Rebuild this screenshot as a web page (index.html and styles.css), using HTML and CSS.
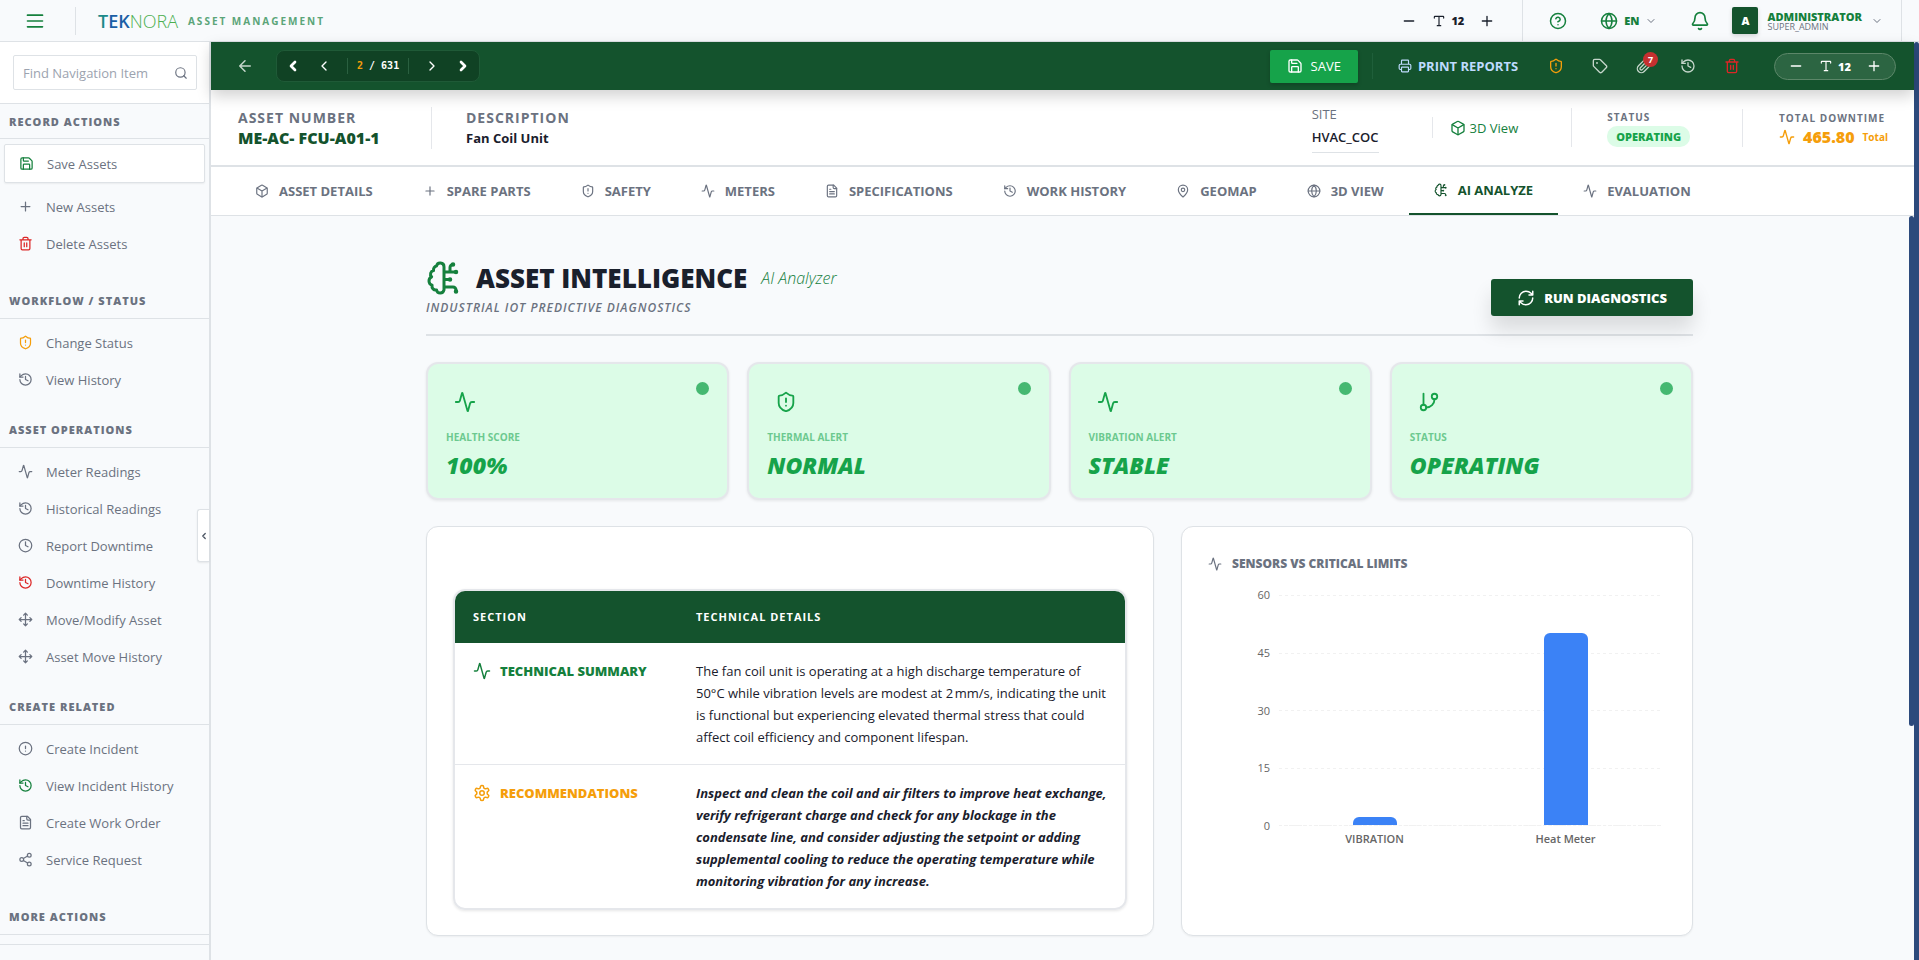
FILE: index.html
```html
<!DOCTYPE html>
<html lang="en">
<head>
  <meta charset="UTF-8">
  <meta name="viewport" content="width=device-width, initial-scale=1.0">
  <title>Teknora Asset Management</title>
  <link rel="stylesheet" href="styles.css">
</head>
<body>
  <!-- Icon sprite -->
  <svg class="sprite" aria-hidden="true">
    <symbol id="i-menu" viewBox="0 0 24 24"><path d="M3 5h18M3 12h18M3 19h18"/></symbol>
    <symbol id="i-search" viewBox="0 0 24 24"><circle cx="11" cy="11" r="8"/><path d="m21 21-4.3-4.3"/></symbol>
    <symbol id="i-save" viewBox="0 0 24 24"><path d="M15.2 3a2 2 0 0 1 1.4.6l3.8 3.8a2 2 0 0 1 .6 1.4V19a2 2 0 0 1-2 2H5a2 2 0 0 1-2-2V5a2 2 0 0 1 2-2z"/><path d="M17 21v-7a1 1 0 0 0-1-1H8a1 1 0 0 0-1 1v7M7 3v4a1 1 0 0 0 1 1h7"/></symbol>
    <symbol id="i-plus" viewBox="0 0 24 24"><path d="M5 12h14M12 5v14"/></symbol>
    <symbol id="i-minus" viewBox="0 0 24 24"><path d="M5 12h14"/></symbol>
    <symbol id="i-trash" viewBox="0 0 24 24"><path d="M3 6h18M19 6v14a2 2 0 0 1-2 2H7a2 2 0 0 1-2-2V6M8 6V4a2 2 0 0 1 2-2h4a2 2 0 0 1 2 2v2M10 11v6M14 11v6"/></symbol>
    <symbol id="i-shield" viewBox="0 0 24 24"><path d="M20 13c0 5-3.5 7.5-7.66 8.95a1 1 0 0 1-.67-.01C7.5 20.5 4 18 4 13V6a1 1 0 0 1 1-1c2 0 4.5-1.2 6.24-2.72a1.17 1.17 0 0 1 1.52 0C14.51 3.81 17 5 19 5a1 1 0 0 1 1 1z"/><path d="M12 8v4M12 16h.01"/></symbol>
    <symbol id="i-history" viewBox="0 0 24 24"><path d="M3 12a9 9 0 1 0 9-9 9.75 9.75 0 0 0-6.74 2.74L3 8"/><path d="M3 3v5h5M12 7v5l4 2"/></symbol>
    <symbol id="i-clock" viewBox="0 0 24 24"><circle cx="12" cy="12" r="10"/><path d="M12 6v6l4 2"/></symbol>
    <symbol id="i-pulse" viewBox="0 0 24 24"><path d="M22 12h-2.48a2 2 0 0 0-1.93 1.46l-2.35 8.36a.25.25 0 0 1-.48 0L9.24 2.18a.25.25 0 0 0-.48 0l-2.35 8.36A2 2 0 0 1 4.49 12H2"/></symbol>
    <symbol id="i-move" viewBox="0 0 24 24"><path d="M12 2v20M15 19l-3 3-3-3M19 9l3 3-3 3M2 12h20M5 9l-3 3 3 3M9 5l3-3 3 3"/></symbol>
    <symbol id="i-alert" viewBox="0 0 24 24"><circle cx="12" cy="12" r="10"/><path d="M12 8v4M12 16h.01"/></symbol>
    <symbol id="i-file" viewBox="0 0 24 24"><path d="M15 2H6a2 2 0 0 0-2 2v16a2 2 0 0 0 2 2h12a2 2 0 0 0 2-2V7z"/><path d="M14 2v4a2 2 0 0 0 2 2h4M10 9H8M16 13H8M16 17H8"/></symbol>
    <symbol id="i-share" viewBox="0 0 24 24"><circle cx="18" cy="5" r="3"/><circle cx="6" cy="12" r="3"/><circle cx="18" cy="19" r="3"/><path d="m8.59 13.51 6.83 3.98M15.41 6.51l-6.82 3.98"/></symbol>
    <symbol id="i-left" viewBox="0 0 24 24"><path d="m15 18-6-6 6-6"/></symbol>
    <symbol id="i-right" viewBox="0 0 24 24"><path d="m9 18 6-6-6-6"/></symbol>
    <symbol id="i-down" viewBox="0 0 24 24"><path d="m6 9 6 6 6-6"/></symbol>
    <symbol id="i-back" viewBox="0 0 24 24"><path d="m12 19-7-7 7-7M19 12H5"/></symbol>
    <symbol id="i-type" viewBox="0 0 24 24"><path d="M12 4v16M4 7V5a1 1 0 0 1 1-1h14a1 1 0 0 1 1 1v2M9 20h6"/></symbol>
    <symbol id="i-help" viewBox="0 0 24 24"><circle cx="12" cy="12" r="10"/><path d="M9.09 9a3 3 0 0 1 5.83 1c0 2-3 3-3 3M12 17h.01"/></symbol>
    <symbol id="i-globe" viewBox="0 0 24 24"><circle cx="12" cy="12" r="10"/><path d="M12 2a14.5 14.5 0 0 0 0 20 14.5 14.5 0 0 0 0-20M2 12h20"/></symbol>
    <symbol id="i-bell" viewBox="0 0 24 24"><path d="M10.27 21a2 2 0 0 0 3.46 0M3.26 15.33A1 1 0 0 0 4 17h16a1 1 0 0 0 .74-1.67C19.41 13.96 18 12.5 18 8A6 6 0 0 0 6 8c0 4.5-1.41 5.96-2.74 7.33"/></symbol>
    <symbol id="i-printer" viewBox="0 0 24 24"><path d="M6 18H4a2 2 0 0 1-2-2v-5a2 2 0 0 1 2-2h16a2 2 0 0 1 2 2v5a2 2 0 0 1-2 2h-2M6 9V3a1 1 0 0 1 1-1h10a1 1 0 0 1 1 1v6"/><rect x="6" y="14" width="12" height="8" rx="1"/></symbol>
    <symbol id="i-tag" viewBox="0 0 24 24"><path d="M12.59 2.59A2 2 0 0 0 11.17 2H4a2 2 0 0 0-2 2v7.17a2 2 0 0 0 .59 1.42l8.7 8.7a2.43 2.43 0 0 0 3.42 0l6.58-6.58a2.43 2.43 0 0 0 0-3.42z"/><circle cx="7.5" cy="7.5" r=".5"/></symbol>
    <symbol id="i-clip" viewBox="0 0 24 24"><path d="m21.44 11.05-9.19 9.19a6 6 0 0 1-8.49-8.49l8.57-8.57A4 4 0 1 1 18 8.84l-8.59 8.57a2 2 0 0 1-2.83-2.83l8.49-8.48"/></symbol>
    <symbol id="i-box" viewBox="0 0 24 24"><path d="M21 8a2 2 0 0 0-1-1.73l-7-4a2 2 0 0 0-2 0l-7 4A2 2 0 0 0 3 8v8a2 2 0 0 0 1 1.73l7 4a2 2 0 0 0 2 0l7-4A2 2 0 0 0 21 16z"/><path d="m3.3 7 8.7 5 8.7-5M12 22V12"/></symbol>
    <symbol id="i-pin" viewBox="0 0 24 24"><path d="M20 10c0 4.99-5.54 10.19-7.4 11.8a1 1 0 0 1-1.2 0C9.54 20.19 4 14.99 4 10a8 8 0 0 1 16 0"/><circle cx="12" cy="10" r="3"/></symbol>
    <symbol id="i-brain" viewBox="0 0 24 24"><path d="M12 4.5a2.5 2.5 0 0 0-4.96-.46 2.5 2.5 0 0 0-1.98 3 2.5 2.5 0 0 0-1.32 4.24 3 3 0 0 0 .34 5.58 2.5 2.5 0 0 0 2.96 3.08 2.5 2.5 0 0 0 4.91.05L12 20V4.5ZM12 13h4M12 18h6a2 2 0 0 1 2 2v1M12 8h8M16 8V5a2 2 0 0 1 2-2"/><circle cx="16" cy="13" r=".5"/><circle cx="18" cy="3" r=".5"/><circle cx="20" cy="21" r=".5"/><circle cx="20" cy="8" r=".5"/></symbol>
    <symbol id="i-refresh" viewBox="0 0 24 24"><path d="M3 12a9 9 0 0 1 9-9 9.75 9.75 0 0 1 6.74 2.74L21 8M21 3v5h-5M21 12a9 9 0 0 1-9 9 9.75 9.75 0 0 1-6.74-2.74L3 16M8 16H3v5"/></symbol>
    <symbol id="i-branch" viewBox="0 0 24 24"><path d="M6 3v12"/><circle cx="18" cy="6" r="3"/><circle cx="6" cy="18" r="3"/><path d="M18 9a9 9 0 0 1-9 9"/></symbol>
    <symbol id="i-gear" viewBox="0 0 24 24"><path d="M12.22 2h-.44a2 2 0 0 0-2 2v.18a2 2 0 0 1-1 1.73l-.43.25a2 2 0 0 1-2 0l-.15-.08a2 2 0 0 0-2.73.73l-.22.38a2 2 0 0 0 .73 2.73l.15.1a2 2 0 0 1 1 1.72v.51a2 2 0 0 1-1 1.74l-.15.09a2 2 0 0 0-.73 2.73l.22.38a2 2 0 0 0 2.73.73l.15-.08a2 2 0 0 1 2 0l.43.25a2 2 0 0 1 1 1.73V20a2 2 0 0 0 2 2h.44a2 2 0 0 0 2-2v-.18a2 2 0 0 1 1-1.73l.43-.25a2 2 0 0 1 2 0l.15.08a2 2 0 0 0 2.73-.73l.22-.39a2 2 0 0 0-.73-2.73l-.15-.08a2 2 0 0 1-1-1.74v-.5a2 2 0 0 1 1-1.74l.15-.09a2 2 0 0 0 .73-2.73l-.22-.38a2 2 0 0 0-2.73-.73l-.15.08a2 2 0 0 1-2 0l-.43-.25a2 2 0 0 1-1-1.73V4a2 2 0 0 0-2-2z"/><circle cx="12" cy="12" r="3"/></symbol>
  </svg>

  <!-- Top bar -->
  <header class="topbar">
    <button class="icon-btn menu-btn" aria-label="Menu"><svg class="icon lg"><use href="#i-menu"/></svg></button>
    <div class="brand">
      <span class="logo"><b><i>T</i>EK</b>NORA</span>
      <span class="brand-sub">ASSET MANAGEMENT</span>
    </div>
    <div class="font-size">
      <button class="icon-btn" aria-label="Smaller text"><svg class="icon"><use href="#i-minus"/></svg></button>
      <span class="size-value"><svg class="icon sm"><use href="#i-type"/></svg>12</span>
      <button class="icon-btn" aria-label="Larger text"><svg class="icon"><use href="#i-plus"/></svg></button>
    </div>
    <div class="top-tools">
      <button class="icon-btn" aria-label="Help"><svg class="icon md"><use href="#i-help"/></svg></button>
      <button class="icon-btn lang"><svg class="icon md"><use href="#i-globe"/></svg>EN<svg class="icon xs grey"><use href="#i-down"/></svg></button>
      <button class="icon-btn" aria-label="Notifications"><svg class="icon lg"><use href="#i-bell"/></svg></button>
      <button class="user">
        <span class="avatar">A</span>
        <span class="user-text"><strong>ADMINISTRATOR</strong><small>SUPER_ADMIN</small></span>
        <svg class="icon xs grey"><use href="#i-down"/></svg>
      </button>
    </div>
  </header>

  <div class="layout">
    <!-- Sidebar -->
    <aside class="sidebar">
      <div class="search">
        <label class="search-box">
          <input type="text" placeholder="Find Navigation Item" aria-label="Find Navigation Item">
          <svg class="icon sm"><use href="#i-search"/></svg>
        </label>
      </div>
      <nav class="nav">
        <h2>RECORD ACTIONS</h2>
        <ul class="tall">
          <li><a href="#" class="active"><svg class="icon green"><use href="#i-save"/></svg>Save Assets</a></li>
          <li><a href="#"><svg class="icon"><use href="#i-plus"/></svg>New Assets</a></li>
          <li><a href="#"><svg class="icon red"><use href="#i-trash"/></svg>Delete Assets</a></li>
        </ul>
        <h2>WORKFLOW / STATUS</h2>
        <ul>
          <li><a href="#"><svg class="icon amber"><use href="#i-shield"/></svg>Change Status</a></li>
          <li><a href="#"><svg class="icon"><use href="#i-history"/></svg>View History</a></li>
        </ul>
        <h2>ASSET OPERATIONS</h2>
        <ul>
          <li><a href="#"><svg class="icon"><use href="#i-pulse"/></svg>Meter Readings</a></li>
          <li><a href="#"><svg class="icon"><use href="#i-history"/></svg>Historical Readings</a></li>
          <li><a href="#"><svg class="icon"><use href="#i-clock"/></svg>Report Downtime</a></li>
          <li><a href="#"><svg class="icon red"><use href="#i-history"/></svg>Downtime History</a></li>
          <li><a href="#"><svg class="icon"><use href="#i-move"/></svg>Move/Modify Asset</a></li>
          <li><a href="#"><svg class="icon"><use href="#i-move"/></svg>Asset Move History</a></li>
        </ul>
        <h2>CREATE RELATED</h2>
        <ul class="tall">
          <li><a href="#"><svg class="icon"><use href="#i-alert"/></svg>Create Incident</a></li>
          <li><a href="#"><svg class="icon green"><use href="#i-history"/></svg>View Incident History</a></li>
          <li><a href="#"><svg class="icon"><use href="#i-file"/></svg>Create Work Order</a></li>
          <li><a href="#"><svg class="icon"><use href="#i-share"/></svg>Service Request</a></li>
        </ul>
        <h2>MORE ACTIONS</h2>
      </nav>
      <div class="sidebar-foot"></div>
      <button class="collapse" aria-label="Collapse sidebar"><svg class="icon xs"><use href="#i-left"/></svg></button>
    </aside>

    <main class="main">
      <!-- Record toolbar -->
      <div class="toolbar">
        <button class="icon-btn pale" aria-label="Back"><svg class="icon md"><use href="#i-back"/></svg></button>
        <div class="pager">
          <button class="icon-btn bold" aria-label="First"><svg class="icon"><use href="#i-left"/></svg></button>
          <button class="icon-btn" aria-label="Previous"><svg class="icon"><use href="#i-left"/></svg></button>
          <span class="count"><em>2</em> / 631</span>
          <button class="icon-btn" aria-label="Next"><svg class="icon"><use href="#i-right"/></svg></button>
          <button class="icon-btn bold" aria-label="Last"><svg class="icon"><use href="#i-right"/></svg></button>
        </div>
        <button class="save"><svg class="icon"><use href="#i-save"/></svg>SAVE</button>
        <button class="print"><svg class="icon sm"><use href="#i-printer"/></svg>PRINT REPORTS</button>
        <div class="tool-icons">
          <button class="icon-btn amber" aria-label="Change status"><svg class="icon"><use href="#i-shield"/></svg></button>
          <button class="icon-btn pale" aria-label="Tag"><svg class="icon"><use href="#i-tag"/></svg></button>
          <button class="icon-btn pale" aria-label="Attachments"><svg class="icon"><use href="#i-clip"/></svg><span class="badge">7</span></button>
          <button class="icon-btn pale" aria-label="History"><svg class="icon"><use href="#i-history"/></svg></button>
          <button class="icon-btn trash" aria-label="Delete"><svg class="icon"><use href="#i-trash"/></svg></button>
        </div>
        <div class="font-size pill">
          <button class="icon-btn" aria-label="Smaller text"><svg class="icon"><use href="#i-minus"/></svg></button>
          <span class="size-value"><svg class="icon sm"><use href="#i-type"/></svg>12</span>
          <button class="icon-btn" aria-label="Larger text"><svg class="icon"><use href="#i-plus"/></svg></button>
        </div>
      </div>

      <!-- Record summary -->
      <section class="summary">
        <div class="field number">
          <span class="label">ASSET NUMBER</span>
          <strong>ME-AC- FCU-A01-1</strong>
        </div>
        <div class="field desc">
          <span class="label">DESCRIPTION</span>
          <strong>Fan Coil Unit</strong>
        </div>
        <div class="site">
          <span>SITE</span>
          <strong>HVAC_COC</strong>
        </div>
        <a href="#" class="view3d"><svg class="icon"><use href="#i-box"/></svg>3D View</a>
        <div class="status">
          <span class="label small">STATUS</span>
          <span class="chip">OPERATING</span>
        </div>
        <div class="downtime">
          <span class="label small">TOTAL DOWNTIME</span>
          <div class="hours"><svg class="icon"><use href="#i-pulse"/></svg><strong>465.80</strong><small>Total</small></div>
        </div>
      </section>

      <!-- Tabs -->
      <nav class="tabs">
        <a href="#"><svg class="icon sm"><use href="#i-box"/></svg>ASSET DETAILS</a>
        <a href="#"><svg class="icon sm"><use href="#i-plus"/></svg>SPARE PARTS</a>
        <a href="#"><svg class="icon sm"><use href="#i-shield"/></svg>SAFETY</a>
        <a href="#"><svg class="icon sm"><use href="#i-pulse"/></svg>METERS</a>
        <a href="#"><svg class="icon sm"><use href="#i-file"/></svg>SPECIFICATIONS</a>
        <a href="#"><svg class="icon sm"><use href="#i-history"/></svg>WORK HISTORY</a>
        <a href="#"><svg class="icon sm"><use href="#i-pin"/></svg>GEOMAP</a>
        <a href="#"><svg class="icon sm"><use href="#i-globe"/></svg>3D VIEW</a>
        <a href="#" class="current"><svg class="icon sm"><use href="#i-brain"/></svg>AI ANALYZE</a>
        <a href="#"><svg class="icon sm"><use href="#i-pulse"/></svg>EVALUATION</a>
      </nav>

      <!-- AI analyzer -->
      <div class="content">
        <div class="page-head">
          <div>
            <h1><svg class="icon xl"><use href="#i-brain"/></svg>ASSET INTELLIGENCE <small>AI Analyzer</small></h1>
            <p>INDUSTRIAL IOT PREDICTIVE DIAGNOSTICS</p>
          </div>
          <button class="run"><svg class="icon md"><use href="#i-refresh"/></svg>RUN DIAGNOSTICS</button>
        </div>

        <div class="cards">
          <div class="card">
            <svg class="icon big"><use href="#i-pulse"/></svg>
            <span class="card-label">HEALTH SCORE</span>
            <strong>100%</strong>
          </div>
          <div class="card">
            <svg class="icon big"><use href="#i-shield"/></svg>
            <span class="card-label">THERMAL ALERT</span>
            <strong>NORMAL</strong>
          </div>
          <div class="card">
            <svg class="icon big"><use href="#i-pulse"/></svg>
            <span class="card-label">VIBRATION ALERT</span>
            <strong>STABLE</strong>
          </div>
          <div class="card">
            <svg class="icon big"><use href="#i-branch"/></svg>
            <span class="card-label">STATUS</span>
            <strong>OPERATING</strong>
          </div>
        </div>

        <div class="panels">
          <section class="panel report">
            <div class="table-wrap">
              <table>
                <thead>
                  <tr><th class="col-section">SECTION</th><th>TECHNICAL DETAILS</th></tr>
                </thead>
                <tbody>
                  <tr>
                    <th scope="row" class="green"><span><svg class="icon md"><use href="#i-pulse"/></svg>TECHNICAL SUMMARY</span></th>
                    <td>The fan coil unit is operating at a high discharge temperature of 50°C while vibration levels are modest at 2&#8239;mm/s, indicating the unit is functional but experiencing elevated thermal stress that could affect coil efficiency and component lifespan.</td>
                  </tr>
                  <tr>
                    <th scope="row" class="amber"><span><svg class="icon md"><use href="#i-gear"/></svg>RECOMMENDATIONS</span></th>
                    <td class="advice">Inspect and clean the coil and air filters to improve heat exchange, verify refrigerant charge and check for any blockage in the condensate line, and consider adjusting the setpoint or adding supplemental cooling to reduce the operating temperature while monitoring vibration for any increase.</td>
                  </tr>
                </tbody>
              </table>
            </div>
          </section>

          <section class="panel sensors">
            <h3><svg class="icon sm"><use href="#i-pulse"/></svg>SENSORS VS CRITICAL LIMITS</h3>
            <div class="chart">
              <div class="axis"><span>60</span><span>45</span><span>30</span><span>15</span><span>0</span></div>
              <div class="plot">
                <div class="slot"><div class="bar" style="height: 3.33%"></div></div>
                <div class="slot"><div class="bar" style="height: 83.33%"></div></div>
              </div>
              <div class="names"><span>VIBRATION</span><span>Heat Meter</span></div>
            </div>
          </section>
        </div>
        <div class="thumb inner"></div>
      </div>
    </main>
    <div class="scroll-rail"></div>
  </div>
</body>
</html>
```
FILE: styles.css
```css
/* Global Styles */
* {
  margin: 0;
  padding: 0;
  box-sizing: border-box;
}

body {
  height: 100vh;
  display: flex;
  flex-direction: column;
  overflow: hidden;
  font-family: "Open Sans", "Noto Sans", sans-serif;
  font-size: 13px;
  color: #1a202c;
  background: #f8fafc;
}

button,
input {
  font: inherit;
  color: inherit;
  border: 0;
  background: none;
}

button {
  cursor: pointer;
}

a {
  color: inherit;
  text-decoration: none;
}

/* Icons */
.sprite {
  position: absolute;
  width: 0;
  height: 0;
}

.icon {
  width: 16px;
  height: 16px;
  flex: none;
  fill: none;
  stroke: currentColor;
  stroke-width: 2;
  stroke-linecap: round;
  stroke-linejoin: round;
}

.icon.xs { width: 12px; height: 12px; }
.icon.sm { width: 14px; height: 14px; }
.icon.md { width: 18px; height: 18px; }
.icon.lg { width: 20px; height: 20px; }
.icon.big { width: 22px; height: 22px; }
.icon.xl { width: 36px; height: 36px; }

.green { color: #15803d; }
.red { color: #dc2626; }
.amber { color: #f59e0b; }
.grey { color: #6b7280; }

.icon-btn {
  display: flex;
  align-items: center;
  justify-content: center;
}

/* Top bar */
.topbar {
  height: 42px;
  flex: none;
  display: flex;
  align-items: center;
  border-bottom: 1px solid #dee2e6;
}

.menu-btn {
  width: 76px;
  height: 28px;
  padding-right: 6px;
  color: #15803d;
  border-right: 1px solid #dee2e6;
}

.brand {
  display: flex;
  align-items: center;
  gap: 10px;
  padding-left: 22px;
  margin-right: auto;
}

.logo {
  font-size: 18px;
  line-height: 20px;
  font-weight: 300;
  color: #4caf50;
}

.logo b {
  font-weight: 600;
  color: #1b5fa6;
}

.logo i {
  font-style: normal;
  color: #1c8a8a;
}

.brand-sub {
  font-size: 10px;
  font-weight: 700;
  letter-spacing: 2px;
  color: #5ba579;
}

.font-size {
  display: flex;
  align-items: center;
  gap: 15px;
}

.font-size .size-value {
  display: flex;
  align-items: center;
  gap: 5px;
  font-size: 11px;
  font-weight: 800;
}

.topbar .font-size {
  padding-right: 27px;
}

.top-tools {
  height: 41px;
  display: flex;
  align-items: center;
  gap: 33px;
  margin-right: 17px;
  padding: 0 18px 0 26px;
  border-left: 1px solid #dee2e6;
  border-right: 1px solid #dee2e6;
  color: #15803d;
}

.lang {
  gap: 6px;
  font-size: 11px;
  font-weight: 800;
}

.user {
  display: flex;
  align-items: center;
  gap: 9px;
  margin-left: -11px;
}

.avatar {
  width: 26px;
  height: 27px;
  line-height: 27px;
  border-radius: 2px;
  background: #14532d;
  color: #ffffff;
  font-weight: 800;
  font-size: 11px;
  box-shadow: 0 2px 4px rgba(0, 0, 0, 0.15);
}

.user-text {
  display: flex;
  flex-direction: column;
  text-align: left;
}

.user-text strong {
  font-size: 11px;
  line-height: 11px;
  font-weight: 800;
}

.user-text small {
  font-size: 9px;
  line-height: 9px;
  font-weight: 500;
  color: #6b7280;
}

/* Layout */
.layout {
  flex: 1;
  min-height: 0;
  display: flex;
}

.main {
  flex: 1;
  min-width: 0;
  display: flex;
  flex-direction: column;
}

.scroll-rail {
  width: 5px;
  background: #2c4a7c;
  border-radius: 3px 3px 0 0;
}

/* Sidebar */
.sidebar {
  position: relative;
  width: 211px;
  flex: none;
  display: flex;
  flex-direction: column;
  border-right: 2px solid #dee2e6;
}

.search {
  padding: 13px 12px 13px 13px;
  background: #ffffff;
  border-bottom: 1px solid #dee2e6;
}

.search-box {
  height: 35px;
  display: flex;
  align-items: center;
  padding: 0 8px 0 9px;
  border: 1px solid #dee2e6;
  border-radius: 2px;
  color: #6b7280;
}

.search-box input {
  flex: 1;
  min-width: 0;
  outline: none;
}

.search-box input::placeholder {
  color: #9ca3af;
}

.nav {
  flex: 1;
  min-height: 0;
  overflow: hidden;
}

.nav h2 {
  height: 36px;
  padding: 0 9px;
  font-size: 11px;
  line-height: 35px;
  font-weight: 800;
  letter-spacing: 1px;
  color: #6b7280;
  border-bottom: 1px solid #dee2e6;
}

.nav h2:first-child {
  height: 35px;
}

.nav ul {
  list-style: none;
  padding: 5px 4px 14px;
}

.nav ul.tall {
  padding-bottom: 21px;
}

.nav a {
  height: 37px;
  display: flex;
  align-items: center;
  gap: 13px;
  padding: 0 14px;
  font-weight: 500;
  color: #6b7280;
}

.nav .icon {
  width: 15px;
  height: 15px;
}

.nav a.active {
  height: 39px;
  margin-bottom: 5px;
  background: #ffffff;
  border: 1px solid #dee2e6;
  border-radius: 2px;
  box-shadow: 0 1px 2px rgba(0, 0, 0, 0.06);
}

.sidebar-foot {
  height: 16px;
  border-top: 1px solid #dee2e6;
}

.collapse {
  position: absolute;
  right: 0;
  top: 467px;
  width: 12px;
  height: 53px;
  display: flex;
  align-items: center;
  justify-content: center;
  color: #4b5563;
  background: #ffffff;
  border: 1px solid #dee2e6;
  border-right: 0;
  border-radius: 3px 0 0 3px;
  box-shadow: 0 1px 2px rgba(0, 0, 0, 0.08);
}

.collapse .icon {
  stroke-width: 3;
  width: 10px;
}

/* Record toolbar */
.toolbar {
  position: relative;
  height: 48px;
  flex: none;
  display: flex;
  align-items: center;
  padding: 0 18px 0 25px;
  background: #14532d;
  color: #ffffff;
  box-shadow: 0 6px 14px rgba(0, 0, 0, 0.18);
}

.toolbar .pale {
  color: #c5d6cb;
}

.pager {
  height: 32px;
  display: flex;
  align-items: center;
  gap: 15px;
  margin-left: 22px;
  margin-right: auto;
  padding: 0 8px;
  border: 1px solid #1f5a37;
  border-radius: 8px;
  background: #104224;
}

.pager .bold .icon {
  stroke-width: 4;
}

.count {
  height: 16px;
  padding: 0 9px;
  font-family: "DejaVu Sans Mono", "DejaVu Sans", monospace;
  font-size: 10px;
  line-height: 16px;
  font-weight: 700;
  border-left: 1px solid #2a6040;
  border-right: 1px solid #2a6040;
}

.count em {
  font-style: normal;
  color: #f59e0b;
}

.save {
  height: 33px;
  display: flex;
  align-items: center;
  gap: 8px;
  padding: 0 17px;
  border-radius: 2px;
  background: #16a34a;
  box-shadow: 0 2px 4px rgba(0, 0, 0, 0.2);
}

.print {
  height: 26px;
  display: flex;
  align-items: center;
  gap: 6px;
  margin-left: 14px;
  padding-left: 25px;
  border-left: 1px solid #1f5f3a;
  font-weight: 700;
  color: #bfdbfe;
}

.tool-icons {
  display: flex;
  gap: 28px;
  margin: 0 34px 0 30px;
}

.tool-icons .icon-btn {
  position: relative;
}

.tool-icons .trash {
  color: #dc2626;
}

.badge {
  position: absolute;
  top: -6px;
  right: -6px;
  width: 15px;
  height: 15px;
  border-radius: 50%;
  background: #c53030;
  color: #ffffff;
  font-size: 9px;
  line-height: 15px;
  font-weight: 700;
}

.pill {
  height: 27px;
  padding: 0 13px;
  border: 1px solid #5c8769;
  border-radius: 14px;
  background: #2c6542;
  color: #ffffff;
}

/* Record summary */
.summary {
  height: 77px;
  flex: none;
  display: flex;
  align-items: center;
  padding: 0 26px 0 27px;
  background: #ffffff;
  border-bottom: 2px solid #dee2e6;
}

.label {
  display: block;
  font-size: 14px;
  line-height: 21px;
  font-weight: 700;
  letter-spacing: 1px;
  color: #6b7280;
}

.label.small {
  font-size: 10px;
  line-height: 18px;
}

.field strong {
  display: block;
  line-height: 21px;
}

.number {
  width: 194px;
  border-right: 1px solid #e5e7eb;
}

.number strong {
  font-size: 16px;
  font-weight: 800;
  color: #14532d;
}

.desc {
  padding-left: 34px;
  margin-right: auto;
}

.site span,
.site strong {
  display: block;
  line-height: 23px;
  font-weight: 500;
  color: #6b7280;
}

.site strong {
  padding-bottom: 3px;
  font-weight: 600;
  color: #1a202c;
  border-bottom: 1px solid #dee2e6;
}

.view3d {
  height: 21px;
  display: flex;
  align-items: center;
  gap: 4px;
  margin-left: 53px;
  padding: 0 53px 0 17px;
  color: #15803d;
  border-left: 1px solid #e5e7eb;
}

.status {
  padding: 0 52px 0 35px;
  border-left: 1px solid #e5e7eb;
}

.chip {
  display: block;
  padding: 0 9px;
  border-radius: 10px;
  background: #dcfce7;
  color: #16a34a;
  font-size: 11px;
  line-height: 21px;
  font-weight: 800;
}

.downtime {
  padding-left: 36px;
  border-left: 1px solid #e5e7eb;
}

.hours {
  display: flex;
  align-items: center;
  gap: 8px;
  line-height: 20px;
  color: #f59e0b;
}

.hours strong {
  font-size: 16px;
  font-weight: 800;
}

.hours small {
  font-size: 10px;
  font-weight: 700;
}

/* Tabs */
.tabs {
  height: 49px;
  flex: none;
  display: flex;
  padding-left: 19px;
  background: #ffffff;
  border-bottom: 1px solid #dee2e6;
}

.tabs a {
  display: flex;
  align-items: center;
  gap: 10px;
  padding: 0 25px;
  font-weight: 700;
  color: #6b7280;
}

.tabs a.current {
  color: #14532d;
  border-bottom: 2px solid #14532d;
}

/* Content */
.content {
  position: relative;
  flex: 1;
  min-height: 0;
  padding: 44px 221px 0 215px;
}

.thumb.inner {
  position: absolute;
  top: 0;
  right: 0;
  width: 5px;
  height: 510px;
  border-radius: 3px;
  background: #2c4a7c;
}

.page-head {
  display: flex;
  justify-content: space-between;
  align-items: flex-end;
  padding-bottom: 18px;
  border-bottom: 2px solid #dee2e6;
}

.page-head h1 {
  display: flex;
  align-items: center;
  gap: 14px;
  font-size: 26px;
  line-height: 36px;
  font-weight: 800;
}

.page-head h1 .icon {
  color: #15803d;
}

.page-head h1 small {
  font-size: 16px;
  font-weight: 300;
  font-style: italic;
  color: #15803d;
}

.page-head p {
  padding-top: 4px;
  font-size: 12px;
  line-height: 16px;
  font-weight: 600;
  font-style: italic;
  letter-spacing: 1px;
  color: #6b7280;
}

.run {
  height: 37px;
  display: flex;
  align-items: center;
  gap: 9px;
  padding: 0 26px;
  border-radius: 3px;
  background: #14532d;
  color: #ffffff;
  font-weight: 800;
  box-shadow: 0 14px 20px rgba(0, 0, 0, 0.12);
}

/* Cards */
.cards {
  display: grid;
  grid-template-columns: repeat(4, 1fr);
  gap: 18px;
  margin-top: 26px;
}

.card {
  position: relative;
  display: flex;
  flex-direction: column;
  height: 138px;
  padding: 27px 18px 0;
  border: 2px solid #e5e7eb;
  border-radius: 12px;
  background: #dcfce7;
  color: #16a34a;
  box-shadow: 0 1px 3px rgba(0, 0, 0, 0.08);
}

.card::after {
  content: "";
  position: absolute;
  top: 18px;
  right: 18px;
  width: 13px;
  height: 13px;
  border-radius: 50%;
  background: #45b871;
}

.card .icon {
  margin-left: 8px;
}

.card-label {
  margin-top: 15px;
  font-size: 10px;
  line-height: 18px;
  font-weight: 700;
  color: #6cc98f;
}

.card strong {
  margin-top: 4px;
  font-size: 23px;
  line-height: 30px;
  font-weight: 800;
  font-style: italic;
}

/* Panels */
.panels {
  display: grid;
  grid-template-columns: 728fr 512fr;
  gap: 27px;
  margin-top: 26px;
}

.panel {
  height: 410px;
  padding: 26px;
  background: #ffffff;
  border: 1px solid #dee2e6;
  border-radius: 12px;
  box-shadow: 0 1px 2px rgba(0, 0, 0, 0.05);
}

.report {
  padding-top: 62px;
}

.table-wrap {
  border: 2px solid #e5e7eb;
  border-radius: 12px;
  overflow: hidden;
  box-shadow: 0 1px 3px rgba(0, 0, 0, 0.1);
}

table {
  width: 100%;
  border-collapse: collapse;
}

th,
td {
  padding: 17px 18px 16px;
  text-align: left;
  vertical-align: top;
  font-size: 13px;
  line-height: 22px;
}

thead th {
  padding: 15px 18px;
  background: #14532d;
  color: #ffffff;
  font-size: 11px;
  font-weight: 700;
  letter-spacing: 1px;
}

.col-section {
  width: 223px;
}

tbody tr + tr {
  border-top: 1px solid #e5e7eb;
}

tbody th {
  font-weight: 800;
}

tbody th span {
  display: flex;
  align-items: center;
  gap: 9px;
}

td {
  font-weight: 500;
}

td.advice {
  font-weight: 700;
  font-style: italic;
}

/* Chart */
.sensors h3 {
  display: flex;
  align-items: center;
  gap: 10px;
  font-size: 12px;
  line-height: 22px;
  font-weight: 800;
  color: #6b7280;
}

.chart {
  display: grid;
  grid-template-columns: 62px 1fr;
  column-gap: 9px;
  margin-top: 20px;
  padding-right: 5px;
}

.axis {
  height: 231px;
  display: flex;
  flex-direction: column;
  justify-content: space-between;
  text-align: right;
  font-size: 11px;
  color: #666666;
}

.axis span {
  line-height: 0;
}

.plot {
  display: flex;
  background: repeating-linear-gradient(to right, transparent 0 3px, #ffffff 3px 6px),
    repeating-linear-gradient(to bottom, #f1f1f1 0 1px, transparent 1px 25%);
  border-bottom: 1px dashed #f1f1f1;
}

.slot {
  flex: 1;
  display: flex;
  align-items: flex-end;
  justify-content: center;
}

.bar {
  width: 44px;
  border-radius: 6px 6px 0 0;
  background: #3b82f6;
}

.names {
  grid-column: 2;
  display: flex;
  padding-top: 4px;
  font-size: 11px;
  line-height: 18px;
  font-weight: 600;
  color: #666666;
}

.names span {
  flex: 1;
  text-align: center;
}
```
